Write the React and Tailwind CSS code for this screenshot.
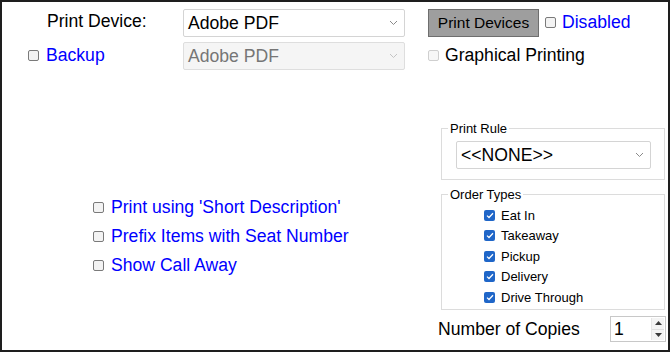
import React from "react";

const Box = ({ checked, disabled }) => {
  if (checked) {
    return (
      <span className="w-[11px] h-[11px] rounded-[2px] bg-[#1f66c8] flex items-center justify-center shrink-0">
        <svg width="8" height="7" viewBox="0 0 8 7">
          <path d="M1 3.6 L3 5.5 L7 1.3" fill="none" stroke="#fff" strokeWidth="1.3" />
        </svg>
      </span>
    );
  }
  return (
    <span
      className={
        disabled
          ? "w-[11px] h-[11px] rounded-[2px] border border-[#cfcfcf] bg-[#f7f7f7] shrink-0"
          : "w-[11px] h-[11px] rounded-[2px] border border-[#7a7a7a] bg-[#f3f3f3] shrink-0"
      }
    />
  );
};

const Chevron = ({ light }) => (
  <svg width="9" height="6" viewBox="0 0 9 6" className="mr-[6px] shrink-0">
    <path d="M1 1 L4.5 4.5 L8 1" fill="none" stroke={light ? "#c4c4c4" : "#8a8a8a"} strokeWidth="1" />
  </svg>
);

const Select = ({ value, disabled, width }) => (
  <div
    className={
      disabled
        ? "h-[28px] flex items-center justify-between border border-[#dedede] rounded-[2px] bg-[#f5f5f5] text-[#767676] pl-[4px]"
        : "h-[28px] flex items-center justify-between border border-[#d4d4d4] rounded-[2px] bg-white text-black pl-[4px]"
    }
    style={{ width }}
  >
    <span>{value}</span>
    <Chevron light={disabled} />
  </div>
);

const orderTypes = ["Eat In", "Takeaway", "Pickup", "Delivery", "Drive Through"];

export default function App() {
  return (
    <div className="w-[670px] h-[352px] border-2 border-[#1e1e1e] bg-white font-['Liberation_Sans',Arial,sans-serif] text-[17.6px] text-black flex flex-col overflow-hidden">
      {/* top controls */}
      <div className="flex pt-[7px] pl-[26px]">
        <div className="w-[155px] flex flex-col gap-[5px]">
          <div className="h-[28px] flex items-center pl-[19px] pb-[3px]">Print Device:</div>
          <div className="h-[28px] flex items-center gap-[7px] pb-[2px]">
            <Box />
            <span className="text-[#0000ff]">Backup</span>
          </div>
        </div>
        <div className="w-[222px] flex flex-col gap-[5px]">
          <Select value="Adobe PDF" width={222} />
          <Select value="Adobe PDF" width={222} disabled />
        </div>
        <div className="ml-[23px] flex flex-col gap-[5px]">
          <div className="h-[28px] flex items-center">
            <button className="w-[111px] h-[28px] bg-[#9e9e9e] border border-[#6e6e6e] text-[15.5px] text-black flex items-center justify-center">
              Print Devices
            </button>
            <div className="flex items-center gap-[6px] ml-[6px] pb-[2px]">
              <Box />
              <span className="text-[#0000ff]">Disabled</span>
            </div>
          </div>
          <div className="h-[28px] flex items-center gap-[6px] pb-[2px]">
            <Box disabled />
            <span>Graphical Printing</span>
          </div>
        </div>
      </div>

      {/* lower area */}
      <div className="flex flex-1">
        <div className="flex-1 pl-[91px] pt-[123px] flex flex-col text-[#0000ff]">
          {["Print using 'Short Description'", "Prefix Items with Seat Number", "Show Call Away"].map((t) => (
            <div key={t} className="h-[29px] flex items-center gap-[7px]">
              <Box />
              <span>{t}</span>
            </div>
          ))}
        </div>

        <div className="w-[228px] mr-[2px] pt-[51px] flex flex-col">
          <fieldset className="ml-[3px] mr-[1px] h-[59px] border border-[#dcdcdc] pl-[6px] pr-0">
            <legend className="px-[2px] text-[13px] leading-[15px]">Print Rule</legend>
            <div className="ml-[8px] mt-[5px]">
              <Select value="<<NONE>>" width={195} />
            </div>
          </fieldset>

          <fieldset className="ml-[3px] mr-[1px] mt-[7px] h-[123px] border border-[#dcdcdc] pl-[6px] pr-0">
            <legend className="px-[2px] text-[13px] leading-[15px]">Order Types</legend>
            <div className="pl-[36px] mt-[3px] flex flex-col text-[13px]">
              {orderTypes.map((t) => (
                <div key={t} className="h-[20.5px] flex items-center gap-[6px]">
                  <Box checked />
                  <span>{t}</span>
                </div>
              ))}
            </div>
          </fieldset>

          <div className="mt-[6px] h-[26px] flex items-center justify-between">
            <span>Number of Copies</span>
            <div className="w-[56px] h-[26px] border border-[#c8c8c8] flex items-stretch bg-white">
              <span className="flex-1 pl-[3px] flex items-center">1</span>
              <div className="w-[13px] flex flex-col border-l border-[#e6e6e6] my-[1px] mr-[1px]">
                <div className="flex-1 flex items-center justify-center bg-[#f4f4f4] border-b border-[#e0e0e0]">
                  <svg width="7" height="4" viewBox="0 0 7 4">
                    <path d="M0 4 L3.5 0 L7 4 Z" fill="#3a3a3a" />
                  </svg>
                </div>
                <div className="flex-1 flex items-center justify-center bg-[#f4f4f4]">
                  <svg width="7" height="4" viewBox="0 0 7 4">
                    <path d="M0 0 L3.5 4 L7 0 Z" fill="#3a3a3a" />
                  </svg>
                </div>
              </div>
            </div>
          </div>
        </div>
      </div>
    </div>
  );
}
